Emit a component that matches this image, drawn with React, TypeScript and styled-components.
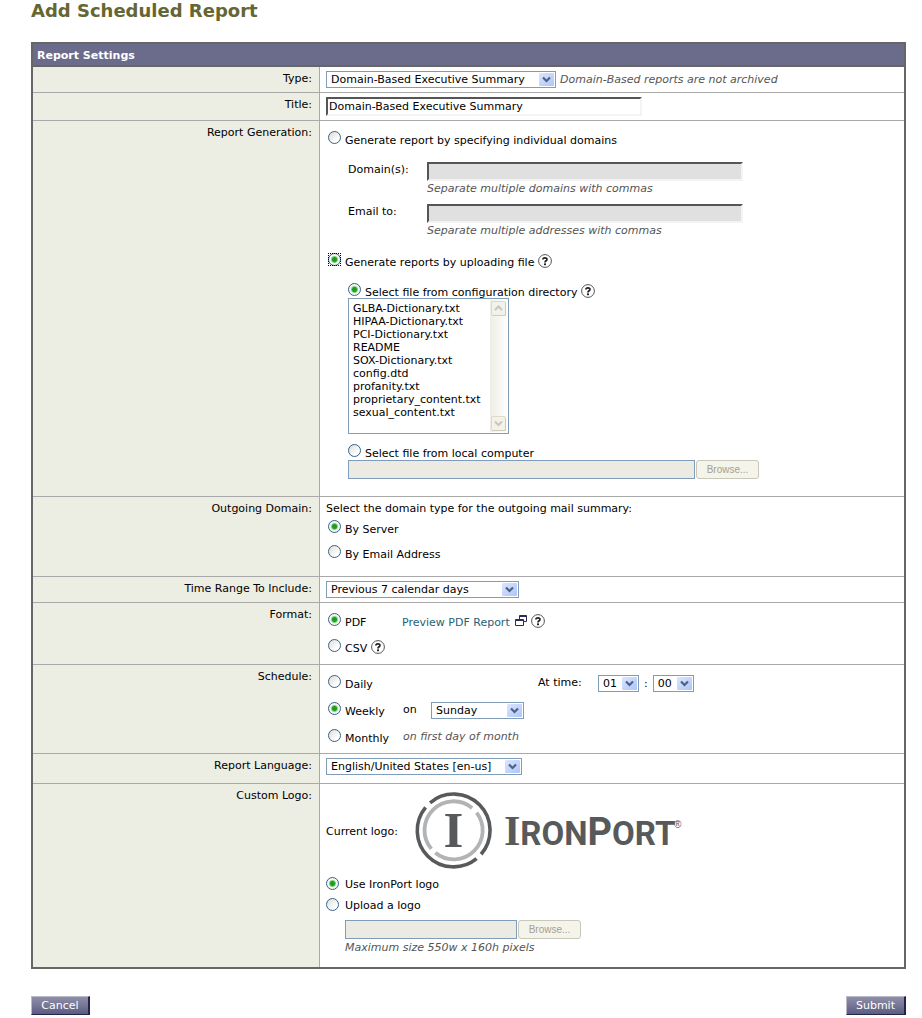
import React from "react";
import styled, { createGlobalStyle } from "styled-components";

const GlobalStyle = createGlobalStyle`
  * { box-sizing: border-box; }
  body {
    margin: 0;
    background: #fff;
    color: #000;
    font-family: Verdana, "DejaVu Sans", sans-serif;
    font-size: 11px;
    line-height: 15px;
  }
  input, select, button { font: inherit; color: inherit; margin: 0; }
`;

const Page = styled.main`
  padding: 0 16px 3px 31px;
`;

const PageTitle = styled.h1`
  margin: 0 0 20px;
  font-size: 18px;
  line-height: 22px;
  font-weight: bold;
  color: #666633;
`;

const Panel = styled.section`
  border: 2px solid #666;
`;

const PanelTitle = styled.h2`
  margin: 0;
  padding: 4px 4px 2px;
  font-size: 11px;
  line-height: 15px;
  color: #fff;
  background: #6b6b8c;
  border-bottom: 2px solid #666;
`;

const Row = styled.div`
  display: grid;
  grid-template-columns: 287px minmax(0, 1fr);
  & + & { border-top: 1px solid #a9a9a9; }
`;

const RowHead = styled.div`
  padding: 4px 7px 4px 6px;
  text-align: right;
  background: #ecede3;
  border-right: 1px solid #a9a9a9;
`;

const Cell = styled.div<{ $top?: number; $bottom?: number }>`
  padding: ${(p) => p.$top ?? 4}px 6px ${(p) => p.$bottom ?? 4}px;
`;

const Line = styled.div<{ $gap?: number }>`
  display: flex;
  align-items: flex-start;
  gap: ${(p) => p.$gap ?? 4}px;
`;

const Stack = styled.div<{ $gap?: number; $indent?: number; $top?: number }>`
  display: flex;
  flex-direction: column;
  gap: ${(p) => p.$gap ?? 0}px;
  padding-left: ${(p) => p.$indent ?? 0}px;
  padding-top: ${(p) => p.$top ?? 0}px;
`;

const Hint = styled.em`
  color: #555;
`;

const HintBlock = styled(Hint)`
  display: block;
`;

const TypeHint = styled(Hint)`
  padding-top: 1px;
`;

const TextBox = styled.input`
  display: block;
  width: 316px;
  height: 19px;
  padding: 0 1px;
  border: 2px solid;
  border-color: #555 #f4f4f4 #f4f4f4 #555;
  border-radius: 0;
  background: #fff;
  &:disabled { background: #e0e0e0; }
`;

const RadioDot = styled.input`
  appearance: none;
  flex: none;
  width: 13px;
  height: 13px;
  border: 1px solid #33628c;
  border-radius: 50%;
  background: linear-gradient(135deg, #dcdcd8, #fff 75%);
  &:checked {
    background: radial-gradient(circle, #1f9d1f 0 2px, #7fd37f 3px, #f6f6f4 4px);
  }
`;

const RadioFrame = styled.span<{ $focused?: boolean }>`
  display: flex;
  align-items: baseline;
  flex: none;
  outline: ${(p) => (p.$focused ? "1px dotted #000" : "none")};
  outline-offset: -1px;
`;

const RadioLine = styled.div`
  display: flex;
  align-items: baseline;
  gap: 4px;
  height: 15px;
`;

const HelpButton = styled.button`
  align-self: flex-start;
  flex: none;
  margin-top: 1px;
  width: 14px;
  height: 14px;
  padding: 0;
  border: 0;
  background: none;
  svg { display: block; }
`;

const SelectFrame = styled.span<{ $width: number }>`
  position: relative;
  display: block;
  flex: none;
  width: ${(p) => p.$width}px;
  height: 17px;
  svg {
    position: absolute;
    top: 2px;
    right: 2px;
    pointer-events: none;
  }
`;

const SelectControl = styled.select`
  appearance: none;
  display: block;
  width: 100%;
  height: 17px;
  padding: 0 0 0 4px;
  border: 1px solid #7f9db9;
  border-radius: 0;
  background: #fff;
`;

const FieldLabel = styled.label`
  width: 79px;
  flex: none;
`;

const ListFrame = styled.div`
  display: flex;
  width: 161px;
  height: 136px;
  padding: 1px;
  border: 1px solid #7f9db9;
`;

const FileList = styled.select`
  flex: 1;
  min-width: 0;
  height: 132px;
  padding: 2px 0;
  border: 0;
  outline: 0;
  background: #fff;
  overflow: hidden;
  option {
    height: 13px;
    min-height: 13px;
    padding: 0 3px;
    line-height: 13px;
  }
`;

const ScrollTrack = styled.div`
  display: flex;
  flex-direction: column;
  justify-content: space-between;
  width: 17px;
  background: linear-gradient(90deg, #eeede5, #fefefb);
  svg { display: block; }
`;

const FileRow = styled.div`
  display: flex;
  gap: 1px;
`;

const FilePath = styled.input<{ $width: number }>`
  width: ${(p) => p.$width}px;
  height: 19px;
  border: 1px solid #7f9db9;
  background: #ebebe4;
`;

const BrowseButton = styled.button`
  width: 63px;
  height: 19px;
  padding: 0;
  border: 1px solid #c9c7ba;
  border-radius: 3px;
  background: #f5f4ea;
  color: #a1a192;
  font-family: "Liberation Sans", sans-serif;
  font-size: 10px;
`;

const FormatName = styled.label`
  width: 53px;
`;

const PreviewLink = styled.a`
  display: flex;
  gap: 5px;
  color: #1f5f78;
  text-decoration: none;
`;

const ScheduleGrid = styled.div`
  display: grid;
  grid-template-columns: 75px 135px 60px auto;
  grid-auto-rows: 17px;
  row-gap: 10px;
  align-items: start;
  justify-content: start;
  padding-left: 2px;
`;

const WideCell = styled.div`
  display: flex;
  grid-column: 2 / -1;
`;

const OnLabel = styled.label`
  width: 28px;
`;

const TimeLabel = styled.span`
  grid-column: 3;
`;

const Times = styled.div`
  display: flex;
  align-items: center;
  gap: 5px;
`;

const LogoLine = styled.div`
  display: flex;
  align-items: center;
  margin-bottom: 7px;
  svg { display: block; }
`;

const LogoCaption = styled.span`
  width: 88px;
`;

const Actions = styled.footer`
  display: flex;
  justify-content: space-between;
  margin-top: 27px;
`;

const ActionButton = styled.button`
  min-width: 59px;
  height: 19px;
  padding: 0 9px;
  border: 1px solid;
  border-width: 1px 2px 1px 1px;
  border-color: #b9bcc8 #26234a #26234a #b9bcc8;
  background: linear-gradient(#8f8fa9, #5c5c82);
  color: #fff;
`;

type RadioProps = {
  id: string;
  label: string;
  name: string;
  checked?: boolean;
  focused?: boolean;
  children?: React.ReactNode;
};

function Radio({ id, label, name, checked, focused, children }: RadioProps) {
  return (
    <RadioLine>
      <RadioFrame $focused={focused}>
        <RadioDot type="radio" id={id} name={name} defaultChecked={checked} />
      </RadioFrame>
      <label htmlFor={id}>{label}</label>
      {children}
    </RadioLine>
  );
}

function Help() {
  return (
    <HelpButton type="button" aria-label="Help">
      <svg width="14" height="14" viewBox="0 0 14 14" fill="none">
        <circle cx="7" cy="7" r="6.4" stroke="#555" />
        <path d="M4.9 5.5C4.9 3.3 9 3.2 9 5.4C9 6.8 7 6.7 7 8.4" stroke="#222" strokeWidth="1.7" />
        <rect x="6" y="9.4" width="2" height="1.8" fill="#222" />
      </svg>
    </HelpButton>
  );
}

function Dropdown({ id, width, options, label }: { id: string; width: number; options: string[]; label?: string }) {
  return (
    <SelectFrame $width={width}>
      <SelectControl id={id} aria-label={label}>
        {options.map((o) => (
          <option key={o}>{o}</option>
        ))}
      </SelectControl>
      <svg width="15" height="13" viewBox="0 0 15 13">
        <defs>
          <linearGradient id={`${id}-arrow`} x1="0" y1="0" x2="1" y2="1">
            <stop offset="0" stopColor="#dbe6fe" />
            <stop offset="1" stopColor="#aec5f8" />
          </linearGradient>
        </defs>
        <rect width="15" height="13" rx="1" fill={`url(#${id}-arrow)`} />
        <path d="M4 4.5L7.5 8L11 4.5" fill="none" stroke="#4d6185" strokeWidth="2.2" />
      </svg>
    </SelectFrame>
  );
}

function ScrollArrow({ up }: { up?: boolean }) {
  return (
    <svg width="17" height="17" viewBox="0 0 17 17" fill="none">
      <rect x="1.5" y="1.5" width="14" height="14" rx="1.5" fill="#f3f2ea" stroke="#dcdacb" />
      <path d="M2.5 15.5H15.5V3" stroke="#cfccba" />
      <path d={up ? "M5 10L8.5 6.5L12 10" : "M5 6.5L8.5 10L12 6.5"} stroke="#c9c7ba" strokeWidth="2" />
    </svg>
  );
}

function FilePicker({ label, width }: { label: string; width: number }) {
  return (
    <FileRow>
      <FilePath type="text" aria-label={label} disabled $width={width} />
      <BrowseButton type="button" disabled>
        Browse...
      </BrowseButton>
    </FileRow>
  );
}

function IronPortLogo() {
  return (
    <svg width="270" height="78" viewBox="0 0 270 78" role="img" aria-label="IronPort">
      <g transform="translate(39.7 38.4)" fill="none">
        <g stroke="#58595b" strokeWidth="3.6">
          <path d="M-23.6 -27.6A36.3 36.3 0 0 1 27.4 23.8" />
          <path d="M22.9 28.2A36.3 36.3 0 0 1 -28.1 -23" />
        </g>
        <g stroke="#b1b3b5" strokeWidth="3.8">
          <path d="M22.9 -17.8A29 29 0 0 1 -18.4 22.4" />
          <path d="M-22.4 18.5A29 29 0 0 1 18.4 -22.4" />
        </g>
      </g>
      <g fill="#58595b" fontWeight="bold">
        <text x="39.5" y="55" textAnchor="middle" fontFamily="Liberation Serif, serif" fontSize="51">
          I
        </text>
        <text x="90" y="53" fontFamily="Roboto, sans-serif" fontSize="33">
          <tspan fontFamily="Liberation Serif, serif" fontSize="42">
            I
          </tspan>
          <tspan>RON</tspan>
          <tspan fontSize="38">P</tspan>
          <tspan>ORT</tspan>
        </text>
      </g>
      <text x="260" y="36" fontFamily="Liberation Sans, sans-serif" fontSize="10" fill="#58595b">
        ®
      </text>
    </svg>
  );
}

const files = [
  "GLBA-Dictionary.txt",
  "HIPAA-Dictionary.txt",
  "PCI-Dictionary.txt",
  "README",
  "SOX-Dictionary.txt",
  "config.dtd",
  "profanity.txt",
  "proprietary_content.txt",
  "sexual_content.txt",
];

export default function App() {
  return (
    <>
      <GlobalStyle />
      <Page>
        <PageTitle>Add Scheduled Report</PageTitle>
        <form onSubmit={(e) => e.preventDefault()}>
          <Panel>
            <PanelTitle>Report Settings</PanelTitle>

            <Row>
              <RowHead>
                <label htmlFor="type">Type:</label>
              </RowHead>
              <Cell>
                <Line>
                  <Dropdown id="type" width={230} options={["Domain-Based Executive Summary"]} />
                  <TypeHint>Domain-Based reports are not archived</TypeHint>
                </Line>
              </Cell>
            </Row>

            <Row>
              <RowHead>
                <label htmlFor="title">Title:</label>
              </RowHead>
              <Cell>
                <TextBox id="title" type="text" defaultValue="Domain-Based Executive Summary" />
              </Cell>
            </Row>

            <Row role="group" aria-labelledby="generation">
              <RowHead id="generation">Report Generation:</RowHead>
              <Cell $top={10} $bottom={17}>
                <Stack $indent={2} $gap={15}>
                  <Radio id="by-domain" name="source" label="Generate report by specifying individual domains" />
                  <Stack $indent={20} $gap={8} $top={1}>
                    <Line $gap={0}>
                      <FieldLabel htmlFor="domains">Domain(s):</FieldLabel>
                      <div>
                        <TextBox id="domains" type="text" disabled />
                        <HintBlock>Separate multiple domains with commas</HintBlock>
                      </div>
                    </Line>
                    <Line $gap={0}>
                      <FieldLabel htmlFor="email">Email to:</FieldLabel>
                      <div>
                        <TextBox id="email" type="text" disabled />
                        <HintBlock>Separate multiple addresses with commas</HintBlock>
                      </div>
                    </Line>
                  </Stack>
                  <Stack $gap={15}>
                    <Radio id="by-file" name="source" label="Generate reports by uploading file" checked focused>
                      <Help />
                    </Radio>
                    <Stack $indent={20} $gap={10}>
                      <div>
                        <Radio id="from-dir" name="file" label="Select file from configuration directory" checked>
                          <Help />
                        </Radio>
                        <ListFrame>
                          <FileList size={9} aria-label="Configuration files">
                            {files.map((f) => (
                              <option key={f}>{f}</option>
                            ))}
                          </FileList>
                          <ScrollTrack>
                            <ScrollArrow up />
                            <ScrollArrow />
                          </ScrollTrack>
                        </ListFrame>
                      </div>
                      <Stack $gap={1}>
                        <Radio id="from-pc" name="file" label="Select file from local computer" />
                        <FilePicker label="Local file" width={347} />
                      </Stack>
                    </Stack>
                  </Stack>
                </Stack>
              </Cell>
            </Row>

            <Row role="group" aria-labelledby="outgoing">
              <RowHead id="outgoing">Outgoing Domain:</RowHead>
              <Cell $bottom={16}>
                Select the domain type for the outgoing mail summary:
                <Stack $indent={2} $gap={10} $top={4}>
                  <Radio id="by-server" name="outgoing" label="By Server" checked />
                  <Radio id="by-email" name="outgoing" label="By Email Address" />
                </Stack>
              </Cell>
            </Row>

            <Row>
              <RowHead>
                <label htmlFor="range">Time Range To Include:</label>
              </RowHead>
              <Cell>
                <Dropdown id="range" width={193} options={["Previous 7 calendar days"]} />
              </Cell>
            </Row>

            <Row role="group" aria-labelledby="format">
              <RowHead id="format">Format:</RowHead>
              <Cell $top={10} $bottom={10}>
                <Stack $indent={2} $gap={11}>
                  <RadioLine>
                    <RadioDot type="radio" id="pdf" name="format" defaultChecked />
                    <FormatName htmlFor="pdf">PDF</FormatName>
                    <PreviewLink href="#preview">
                      Preview PDF Report
                      <svg width="12" height="11" viewBox="0 0 12 11" fill="none" stroke="#2b2b55">
                        <path d="M4.5 4V0.5H11.5V6.5H8.5M4 1.5H12" />
                        <path d="M0.5 4.5H8.5V10.5H0.5ZM0 5.5H9" />
                      </svg>
                    </PreviewLink>
                    <Help />
                  </RadioLine>
                  <Radio id="csv" name="format" label="CSV">
                    <Help />
                  </Radio>
                </Stack>
              </Cell>
            </Row>

            <Row role="group" aria-labelledby="schedule">
              <RowHead id="schedule">Schedule:</RowHead>
              <Cell $top={10} $bottom={7}>
                <ScheduleGrid>
                  <Radio id="daily" name="schedule" label="Daily" />
                  <TimeLabel>At time:</TimeLabel>
                  <Times>
                    <Dropdown id="hour" width={41} options={["01"]} label="Hour" />
                    :
                    <Dropdown id="minute" width={41} options={["00"]} label="Minute" />
                  </Times>
                  <Radio id="weekly" name="schedule" label="Weekly" checked />
                  <WideCell>
                    <OnLabel htmlFor="day">on</OnLabel>
                    <Dropdown id="day" width={93} options={["Sunday"]} />
                  </WideCell>
                  <Radio id="monthly" name="schedule" label="Monthly" />
                  <WideCell>
                    <Hint>on first day of month</Hint>
                  </WideCell>
                </ScheduleGrid>
              </Cell>
            </Row>

            <Row>
              <RowHead>
                <label htmlFor="language">Report Language:</label>
              </RowHead>
              <Cell $bottom={8}>
                <Dropdown id="language" width={196} options={["English/United States [en-us]"]} />
              </Cell>
            </Row>

            <Row role="group" aria-labelledby="logo">
              <RowHead id="logo">Custom Logo:</RowHead>
              <Cell $top={8} $bottom={12}>
                <LogoLine>
                  <LogoCaption>Current logo:</LogoCaption>
                  <IronPortLogo />
                </LogoLine>
                <Stack $gap={6}>
                  <Line $gap={6}>
                    <RadioDot type="radio" id="logo-default" name="logo" defaultChecked />
                    <label htmlFor="logo-default">Use IronPort logo</label>
                  </Line>
                  <Line $gap={6}>
                    <RadioDot type="radio" id="logo-upload" name="logo" />
                    <label htmlFor="logo-upload">Upload a logo</label>
                  </Line>
                  <Stack $indent={19} $gap={1} $top={1}>
                    <FilePicker label="Logo file" width={172} />
                    <Hint>Maximum size 550w x 160h pixels</Hint>
                  </Stack>
                </Stack>
              </Cell>
            </Row>
          </Panel>

          <Actions>
            <ActionButton type="button">Cancel</ActionButton>
            <ActionButton type="submit">Submit</ActionButton>
          </Actions>
        </form>
      </Page>
    </>
  );
}
